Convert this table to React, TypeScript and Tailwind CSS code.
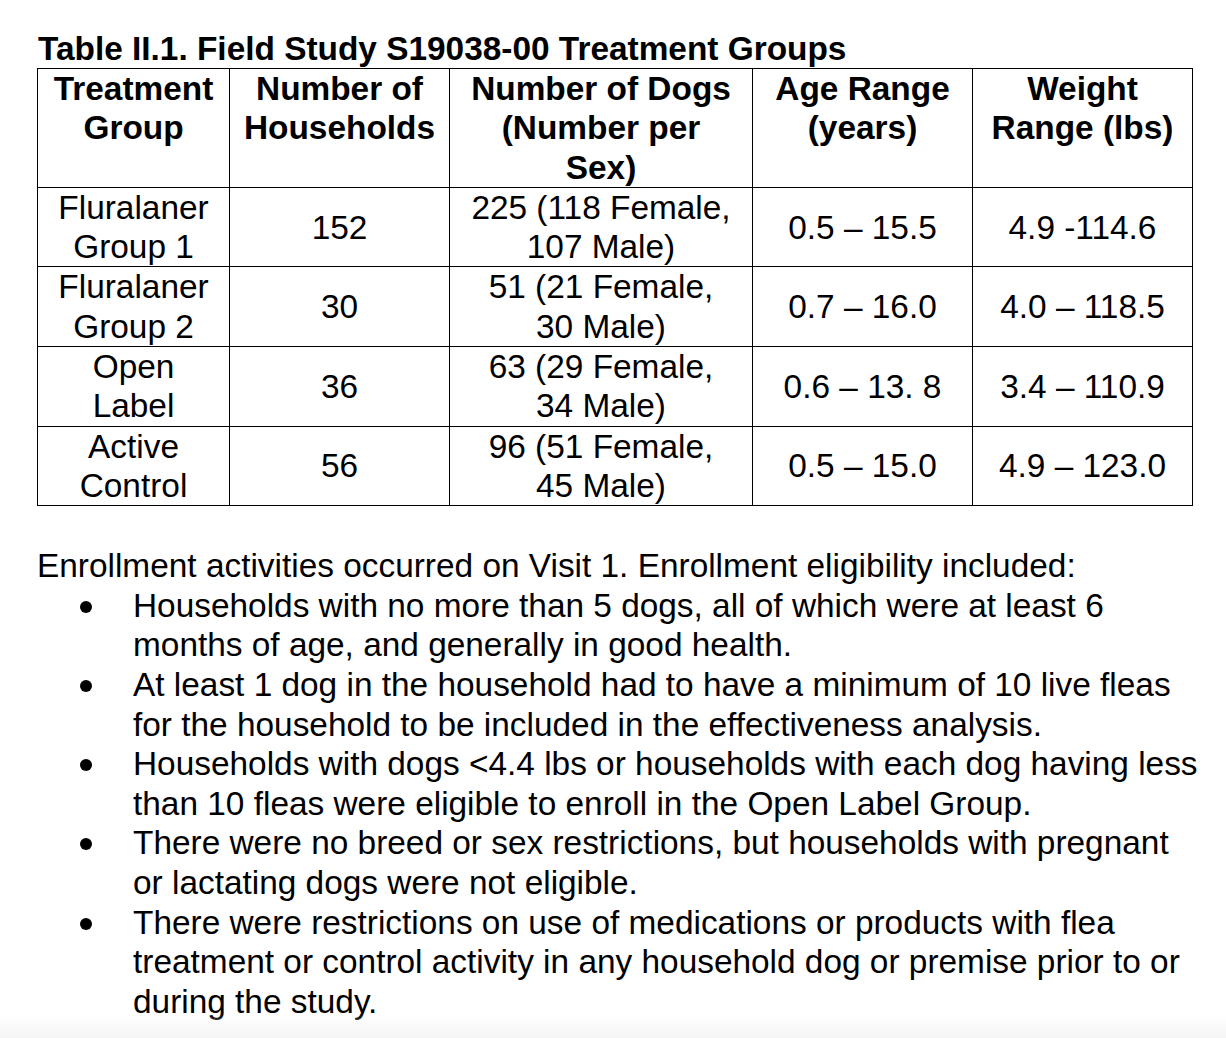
const rows = [
  { group: ["Fluralaner", "Group 1"], households: "152", dogs: ["225 (118 Female,", "107 Male)"], age: "0.5 – 15.5", weight: "4.9 -114.6" },
  { group: ["Fluralaner", "Group 2"], households: "30", dogs: ["51 (21 Female,", "30 Male)"], age: "0.7 – 16.0", weight: "4.0 – 118.5" },
  { group: ["Open", "Label"], households: "36", dogs: ["63 (29 Female,", "34 Male)"], age: "0.6 – 13. 8", weight: "3.4 – 110.9" },
  { group: ["Active", "Control"], households: "56", dogs: ["96 (51 Female,", "45 Male)"], age: "0.5 – 15.0", weight: "4.9 – 123.0" },
];

const bullets = [
  ["Households with no more than 5 dogs, all of which were at least 6", "months of age, and generally in good health."],
  ["At least 1 dog in the household had to have a minimum of 10 live fleas", "for the household to be included in the effectiveness analysis."],
  ["Households with dogs <4.4 lbs or households with each dog having less", "than 10 fleas were eligible to enroll in the Open Label Group."],
  ["There were no breed or sex restrictions, but households with pregnant", "or lactating dogs were not eligible."],
  [
    "There were restrictions on use of medications or products with flea",
    "treatment or control activity in any household dog or premise prior to or",
    "during the study.",
  ],
];

const headers = [
  ["Treatment", "Group"],
  ["Number of", "Households"],
  ["Number of Dogs", "(Number per", "Sex)"],
  ["Age Range", "(years)"],
  ["Weight", "Range (lbs)"],
];

function Lines({ lines }: { lines: string[] }) {
  return (
    <>
      {lines.map((l) => (
        <div key={l} className="whitespace-nowrap">
          {l}
        </div>
      ))}
    </>
  );
}

export default function App() {
  return (
    <div className="min-h-screen bg-white text-black font-['Liberation_Sans',Arial,sans-serif] text-[33.4px] leading-[39.6px] pl-[37px] pt-[29px]">
      <h1 className="font-bold pl-px leading-[39px] whitespace-nowrap">Table II.1. Field Study S19038-00 Treatment Groups</h1>

      <table className="w-[1155px] border-collapse table-fixed leading-[39.3px]">
        <colgroup>
          <col className="w-[192px]" />
          <col className="w-[220px]" />
          <col className="w-[303px]" />
          <col className="w-[220px]" />
          <col className="w-[220px]" />
        </colgroup>
        <thead>
          <tr>
            {headers.map((h) => (
              <th key={h[0]} className="border border-black p-0 align-top text-center font-bold h-[118px]">
                <Lines lines={h} />
              </th>
            ))}
          </tr>
        </thead>
        <tbody>
          {rows.map((r) => (
            <tr key={r.group.join()} className="h-[79.5px]">
              <td className="border border-black p-0 text-center align-middle">
                <Lines lines={r.group} />
              </td>
              <td className="border border-black p-0 text-center align-middle">{r.households}</td>
              <td className="border border-black p-0 text-center align-middle">
                <Lines lines={r.dogs} />
              </td>
              <td className="border border-black p-0 text-center align-middle">{r.age}</td>
              <td className="border border-black p-0 text-center align-middle">{r.weight}</td>
            </tr>
          ))}
        </tbody>
      </table>

      <p className="mt-[40px] whitespace-nowrap">
        Enrollment activities occurred on Visit 1. Enrollment eligibility included:
      </p>
      <ul>
        {bullets.map((b) => (
          <li key={b[0]} className="flex">
            <div className="w-[96px] shrink-0 pl-[43px] pt-[15px]">
              <span className="block h-[12px] w-[12px] rounded-full bg-black" />
            </div>
            <div>
              <Lines lines={b} />
            </div>
          </li>
        ))}
      </ul>

      <div className="pointer-events-none fixed inset-x-0 bottom-0 h-[24px] bg-linear-to-b from-white/0 to-[#f3f3f3]/80" />
    </div>
  );
}
